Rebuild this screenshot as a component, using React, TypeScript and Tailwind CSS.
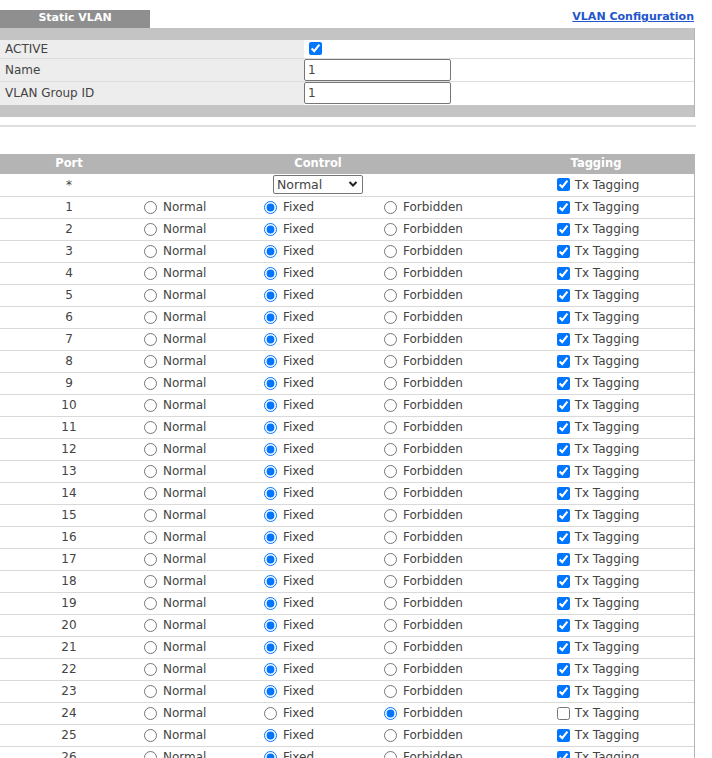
import React from 'react';

const ports = Array.from({ length: 26 }, (_, i) => {
  const n = i + 1;
  return { port: n, control: n === 24 ? 'forbidden' : 'fixed', tagged: n !== 24 };
});

function Radio({ checked, label, name }: { checked: boolean; label: string; name: string }) {
  return (
    <label className="flex items-center gap-[6px] pl-[6px]">
      <input type="radio" name={name} defaultChecked={checked} className="m-0 h-[13px] w-[13px]" />
      <span>{label}</span>
    </label>
  );
}

export default function App() {
  return (
    <div className="w-[712px] h-[758px] overflow-hidden bg-white text-[12px] text-[#444]" style={{ fontFamily: '"DejaVu Sans", sans-serif' }}>
      {/* Title row */}
      <div className="flex items-end justify-between pt-[9px] w-[694px]">
        <div className="w-[150px] h-[18px] bg-[#8f8f8f] text-white text-[11px] font-bold flex items-center justify-center">
          Static VLAN
        </div>
        <a href="#" className="text-[11px] font-bold text-[#2255cc] underline mb-[2px]">VLAN Configuration</a>
      </div>

      {/* Settings panel */}
      <div className="w-[695px] border-r border-[#b5b5b5]">
        <div className="h-[12px] bg-[#c4c4c4]" />
        <div className="grid grid-cols-[304px_1fr]">
          <div className="h-[19px] bg-[#ededed] border-b border-[#dcdcdc] pl-[5px] flex items-center">ACTIVE</div>
          <div className="h-[19px] border-b border-[#dcdcdc] pl-[5px] flex items-center">
            <input type="checkbox" defaultChecked className="m-0 h-[13px] w-[13px]" />
          </div>
          <div className="h-[23px] bg-[#ededed] border-b border-[#dcdcdc] pl-[5px] flex items-center">Name</div>
          <div className="h-[23px] border-b border-[#dcdcdc] flex items-center">
            <input defaultValue="1" className="w-[147px] h-[22px] border border-[#767676] rounded-[2px] px-[3px] text-[12px]" />
          </div>
          <div className="h-[23px] bg-[#ededed] pl-[5px] flex items-center">VLAN Group ID</div>
          <div className="h-[23px] flex items-center">
            <input defaultValue="1" className="w-[147px] h-[22px] border border-[#767676] rounded-[2px] px-[3px] text-[12px]" />
          </div>
        </div>
        <div className="h-[12px] bg-[#c4c4c4]" />
      </div>

      <div className="mt-[8px] h-[2px] w-[696px] bg-[#dedede]" />

      {/* Port table */}
      <div className="mt-[27px] w-[695px] border-r border-[#b5b5b5]">
        <div className="grid grid-cols-[138px_360px_1fr] h-[20px] bg-[#b4b4b4] text-white font-bold text-[11.5px] items-center text-center">
          <div>Port</div>
          <div>Control</div>
          <div>Tagging</div>
        </div>

        <div className="grid grid-cols-[138px_360px_1fr] h-[23px] items-center border-b border-[#d9d9d9]">
          <div className="text-center">*</div>
          <div className="flex justify-center">
            <div className="relative w-[90px] h-[19px]">
              <select defaultValue="Normal" className="appearance-none w-full h-full border border-[#767676] rounded-[2px] pl-[3px] text-[12.5px] bg-white">
                <option>Normal</option>
                <option>Fixed</option>
                <option>Forbidden</option>
              </select>
              <svg className="absolute right-[5px] top-[5px] pointer-events-none" width="10" height="8" viewBox="0 0 10 8">
                <path d="M1.5 2 L5 5.5 L8.5 2" fill="none" stroke="#222" strokeWidth="2" />
              </svg>
            </div>
          </div>
          <label className="flex items-center justify-center gap-[5px] pl-[4px]">
            <input type="checkbox" defaultChecked className="m-0 h-[13px] w-[13px]" />
            <span>Tx Tagging</span>
          </label>
        </div>

        {ports.map(p => (
          <div key={p.port} className="grid grid-cols-[138px_120px_120px_120px_1fr] h-[22px] items-center border-b border-[#d9d9d9]">
            <div className="text-center">{p.port}</div>
            <Radio name={`c${p.port}`} label="Normal" checked={p.control === 'normal'} />
            <Radio name={`c${p.port}`} label="Fixed" checked={p.control === 'fixed'} />
            <Radio name={`c${p.port}`} label="Forbidden" checked={p.control === 'forbidden'} />
            <label className="flex items-center justify-center gap-[5px] pl-[4px]">
              <input type="checkbox" defaultChecked={p.tagged} className="m-0 h-[13px] w-[13px]" />
              <span>Tx Tagging</span>
            </label>
          </div>
        ))}
      </div>
    </div>
  );
}
